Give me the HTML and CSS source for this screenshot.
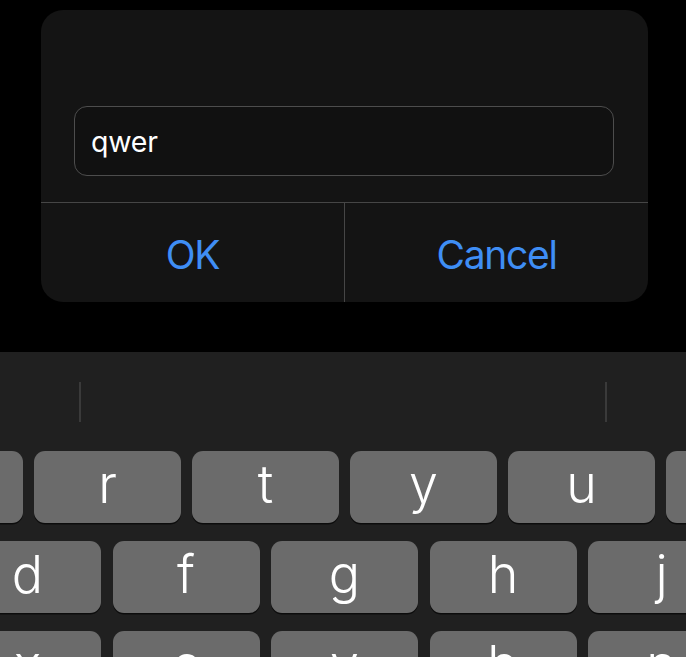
FILE: index.html
```html
<!DOCTYPE html>
<html>
<head>
<meta charset="utf-8">
<link rel="stylesheet" href="styles.css">
</head>
<body>
<div class="screen">
  <div class="alert">
    <div class="field"><span class="field-text">qwer</span></div>
    <div class="actions">
      <div class="action">OK</div>
      <div class="action action-right">Cancel</div>
    </div>
  </div>
  <div class="keyboard">
    <div class="suggest">
      <div class="suggest-cell"></div>
      <div class="suggest-cell suggest-mid"></div>
      <div class="suggest-cell"></div>
    </div>
    <div class="row row1">
      <div class="key">e</div>
      <div class="key">r</div>
      <div class="key">t</div>
      <div class="key">y</div>
      <div class="key">u</div>
      <div class="key">i</div>
    </div>
    <div class="row row2">
      <div class="key">d</div>
      <div class="key">f</div>
      <div class="key">g</div>
      <div class="key">h</div>
      <div class="key">j</div>
    </div>
    <div class="row row3">
      <div class="key">x</div>
      <div class="key">c</div>
      <div class="key">v</div>
      <div class="key">b</div>
      <div class="key">n</div>
    </div>
  </div>
</div>
</body>
</html>
```

FILE: styles.css
```css
html, body {
  margin: 0;
  padding: 0;
  background: #000;
}
.screen {
  width: 686px;
  height: 657px;
  overflow: hidden;
  background: #000;
  font-family: Inter, "Liberation Sans", sans-serif;
}
.alert {
  margin: 10px 38px 0 41px;
  height: 292px;
  background: #141414;
  border-radius: 22px;
  display: flex;
  flex-direction: column;
  box-sizing: border-box;
  padding-top: 96px;
}
.field {
  margin: 0 34px 0 33px;
  height: 70px;
  box-sizing: border-box;
  border: 1.5px solid #4d4d4d;
  border-radius: 13px;
  background: #111;
  display: flex;
  align-items: center;
  padding-left: 16px;
}
.field-text {
  color: #fff;
  font-size: 28.5px;
  letter-spacing: -0.2px;
  margin-top: 1px;
}
.actions {
  margin-top: 26px;
  border-top: 1px solid #464646;
  flex: 1;
  display: flex;
}
.action {
  flex: 1;
  display: flex;
  align-items: center;
  justify-content: center;
  color: #3f8ef5;
  font-size: 39px;
  letter-spacing: -1.3px;
  padding-top: 3px;
}
.action-right {
  border-left: 1px solid #464646;
}
.keyboard {
  margin-top: 50px;
  height: 305px;
  background: #202020;
  overflow: hidden;
}
.suggest {
  height: 99px;
  display: flex;
  align-items: center;
  padding-bottom: 18px;
  box-sizing: border-box;
}
.suggest-cell {
  width: 79px;
  height: 40px;
  margin-top: 18px;
}
.suggest-mid {
  width: 526px;
  border-left: 2px solid #3a3a3a;
  border-right: 2px solid #3a3a3a;
}
.row {
  display: flex;
  gap: 11px;
  margin-bottom: 18px;
}
.row1 {
  margin-left: -124px;
}
.row2, .row3 {
  margin-left: -46px;
  gap: 11.5px;
}
.key {
  flex: 0 0 147px;
  height: 72px;
  background: #6b6b6b;
  border-radius: 11px;
  box-shadow: 0 1.5px 0 #0c0c0c;
  color: #fff;
  font-size: 52px;
  font-weight: 300;
  text-align: center;
  line-height: 68px;
}
```
